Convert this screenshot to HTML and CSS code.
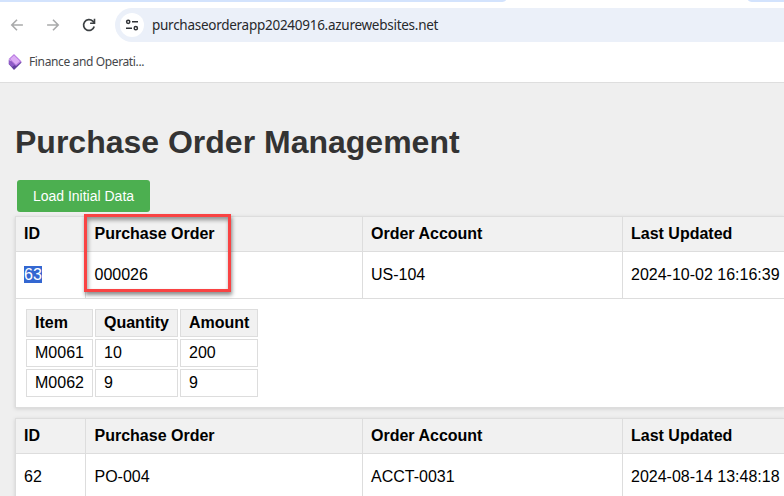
FILE: index.html
```html
<!DOCTYPE html>
<html lang="en">
<head>
<meta charset="utf-8">
<title>Purchase Order Management</title>
<link rel="stylesheet" href="styles.css">
</head>
<body>
<header class="browser">
  <div class="tabs"><span class="tab-left"></span><span class="tab-right"></span></div>
  <div class="toolbar">
    <svg class="nav" viewBox="0 0 16 16"><path d="M13.9 8H3M8 2.8L2.8 8L8 13.2" fill="none" stroke="#a9aaab" stroke-width="1.6"/></svg>
    <svg class="nav" viewBox="0 0 16 16"><path d="M2.1 8H13M8 2.8L13.2 8L8 13.2" fill="none" stroke="#a9aaab" stroke-width="1.6"/></svg>
    <svg class="nav" viewBox="0 0 16 16"><path d="M13.2 9.5A5.4 5.4 0 1 1 11.8 4.2L13.3 5.8" fill="none" stroke="#3c4043" stroke-width="1.7"/><path d="M14.3 1.8V7H9.1V5.4H12.7V1.8Z" fill="#3c4043"/></svg>
    <div class="address">
      <span class="site"><svg viewBox="0 0 14 14"><g fill="none" stroke="#303236" stroke-width="1.5"><circle cx="3.2" cy="3.8" r="1.6"/><path d="M7 3.8H13M1 10.2H7"/><circle cx="10.8" cy="10.2" r="1.6"/></g></svg></span>
      <span class="url">purchaseorderapp20240916.azurewebsites.net</span>
    </div>
  </div>
  <div class="bookmarks">
    <svg class="favicon" viewBox="0 0 14 16"><path d="M.7 10L4 5L7 8L10 5L13.6 8.5L6 16Z" fill="#63409f"/><path d="M.7 5.5L7 11L4 13L.7 10Z" fill="#8e5bc7"/><path d="M6 0L13.6 7.5L8 12L.7 5Z" fill="#b87be0"/><path d="M6 1.4L11.8 7.2L8 10.5L2.2 5Z" fill="#dcacf5"/></svg>
    <span>Finance and Operati...</span>
  </div>
</header>
<main>
  <h1>Purchase Order Management</h1>
  <button>Load Initial Data</button>
  <section class="order">
    <div class="row head"><b>ID</b><b>Purchase Order</b><b>Order Account</b><b>Last Updated</b></div>
    <div class="row"><span><mark>63</mark></span><span>000026</span><span>US-104</span><span>2024-10-02 16:16:39</span></div>
    <div class="detail">
      <div class="lines">
        <b>Item</b><b>Quantity</b><b>Amount</b>
        <span>M0061</span><span>10</span><span>200</span>
        <span>M0062</span><span>9</span><span>9</span>
      </div>
    </div>
    <div class="callout"></div>
  </section>
  <section class="order">
    <div class="row head"><b>ID</b><b>Purchase Order</b><b>Order Account</b><b>Last Updated</b></div>
    <div class="row"><span>62</span><span>PO-004</span><span>ACCT-0031</span><span>2024-08-14 13:48:18</span></div>
  </section>
</main>
</body>
</html>
```
FILE: styles.css
```css
* { box-sizing: border-box; }
body {
  margin: 0;
  height: 496px;
  overflow: hidden;
  background: #efefef;
  color: #000;
  font: 16px/20px "Liberation Sans", Arial, sans-serif;
}
.browser { height: 83px; background: #fff; border-bottom: 1px solid #dedede; font-family: "Noto Sans", sans-serif; }
.tabs { display: flex; justify-content: space-between; height: 2px; }
.tab-left { width: 506px; background: #d3e3fd; border-bottom-right-radius: 6px 2px; }
.tab-right { width: 36px; background: #d3e3fd; border-bottom-left-radius: 6px 2px; }
.toolbar { display: flex; align-items: center; height: 46px; padding-left: 9px; }
.nav { width: 16px; height: 16px; margin-right: 20px; }
.address { display: flex; align-items: center; flex: 1; height: 34px; margin-left: -2px; padding-left: 5px; background: #ebf0f9; border-radius: 17px 0 0 17px; }
.site { display: flex; align-items: center; justify-content: center; width: 24px; height: 24px; border-radius: 50%; background: #fff; }
.site svg { width: 14px; height: 14px; }
.url { margin-left: 8px; font-size: 13.5px; color: #27292c; letter-spacing: -.27px; white-space: nowrap; }
.bookmarks { display: flex; align-items: center; height: 28px; padding-left: 8px; font-size: 12px; letter-spacing: -.37px; color: #45474a; }
.favicon { width: 14px; height: 16px; margin-right: 7px; }
main { padding: 40px 0 0 15px; }
h1 { margin: 0 0 19px; color: #333; font-size: 32px; line-height: 38px; }
button { display: block; width: 133px; height: 32px; margin: 0 0 4px 2px; padding: 0; border: 0; border-radius: 3px; background: #4caf50; color: #fff; font: 14px/32px "Liberation Sans", Arial, sans-serif; }
.order { position: relative; margin-bottom: 10px; border: 1px solid #ddd; border-right: 0; background: #fff; box-shadow: 0 1px 4px rgba(0, 0, 0, .13); }
.row { display: grid; grid-template-columns: 70px 277px 260px 1fr; height: 47px; border-bottom: 1px solid #ddd; line-height: 46px; }
.row > * { padding-left: 8px; border-right: 1px solid #ddd; white-space: nowrap; }
.row > :nth-child(2) { padding-left: 8.5px; }
.row > :last-child { border-right: 0; }
.head { height: 35px; background: #f1f1f1; line-height: 33px; }
mark { background: #3367d1; color: #fff; }
.detail { height: 108px; padding: 10px; }
.lines { display: grid; grid-template-columns: 67px 83px 78px; grid-auto-rows: 28px; gap: 2px; }
.lines > * { padding-left: 8px; border: 1px solid #ddd; line-height: 26px; }
.lines b { background: #f1f1f1; }
.callout { position: absolute; top: -3px; left: 68px; width: 147px; height: 78px; border: 3px solid #f94343; box-shadow: 1px 3px 4px rgba(0, 0, 0, .45), inset 1px 3px 4px rgba(0, 0, 0, .4); }
```
